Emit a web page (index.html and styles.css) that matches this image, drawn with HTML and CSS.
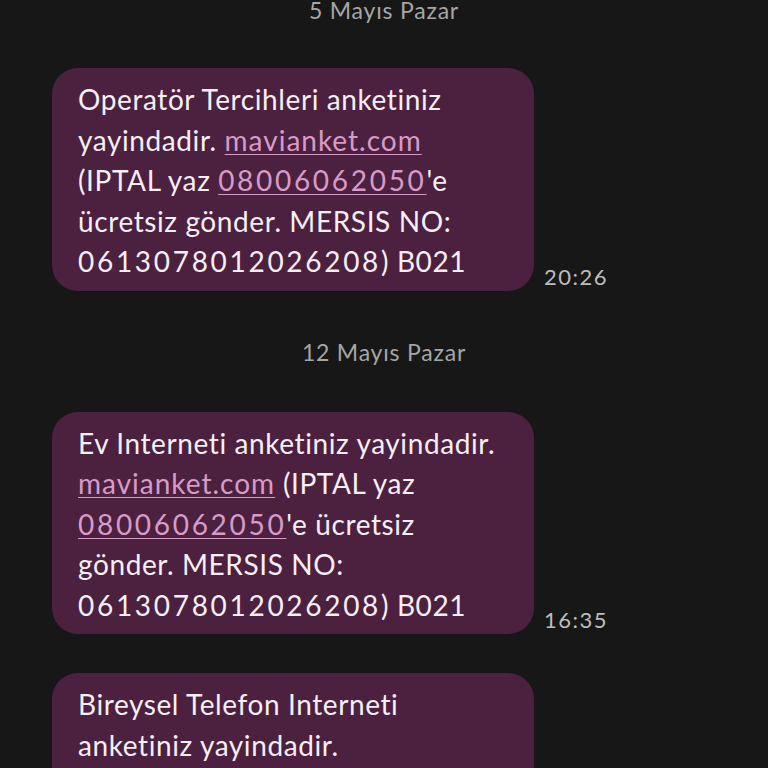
FILE: index.html
```html
<!DOCTYPE html>
<html>
<head>
    <title>Mesajlar</title>
    <link rel="stylesheet" href="styles.css">
</head>
<body>
    <div class="thread">
        <div class="date first">5 Mayıs Pazar</div>

        <div class="msg-row">
            <div class="bubble">
                Operatör Tercihleri anketiniz<br>
                yayindadir. <a class="link" href="#">mavianket.com</a><br>
                (IPTAL yaz <a class="link num" href="#">08006062050</a>'e<br>
                ücretsiz gönder. MERSIS NO:<br>
                <span class="num">0613078012026208</span>) B021
            </div>
            <span class="time">20:26</span>
        </div>

        <div class="date">12 Mayıs Pazar</div>

        <div class="msg-row">
            <div class="bubble">
                Ev Interneti anketiniz yayindadir.<br>
                <a class="link" href="#">mavianket.com</a> (IPTAL yaz<br>
                <a class="link num" href="#">08006062050</a>'e ücretsiz<br>
                gönder. MERSIS NO:<br>
                <span class="num">0613078012026208</span>) B021
            </div>
            <span class="time">16:35</span>
        </div>

        <div class="msg-row next">
            <div class="bubble">
                Bireysel Telefon Interneti<br>
                anketiniz yayindadir.<br>
                <a class="link" href="#">mavianket.com</a> (IPTAL yaz<br>
                <a class="link num" href="#">08006062050</a>'e ücretsiz<br>
                gönder. MERSIS NO:
            </div>
        </div>
    </div>
</body>
</html>
```

FILE: styles.css
```css
body { margin: 0; background: #171717; font-family: Lato, "Noto Sans", sans-serif; overflow: hidden; height: 768px; }
.thread { display: flex; flex-direction: column; }
.date { text-align: center; font-size: 23px; line-height: 24px; letter-spacing: 0.8px; color: #a6a6a6; margin: 49px 0 48px; }
.date.first { margin: -2px 0 46px; }
.msg-row { display: flex; align-items: flex-end; gap: 10px; padding-left: 52px; }
.msg-row.next { margin-top: 39px; }
.bubble { width: 482px; box-sizing: border-box; padding: 11px 20px 9px 26px; background: #4b213f; color: #f6eff4; border-radius: 26px; font-size: 28px; line-height: 40.5px; letter-spacing: 0.6px; white-space: nowrap; }
.link { color: #d89bc8; letter-spacing: 1px; text-decoration: underline; text-decoration-thickness: 1px; text-underline-offset: 3px; }
.num { letter-spacing: 2.7px; }
.time { font-size: 22px; line-height: 24px; letter-spacing: 1.5px; color: #bdbdbd; margin-bottom: 2px; }
```
